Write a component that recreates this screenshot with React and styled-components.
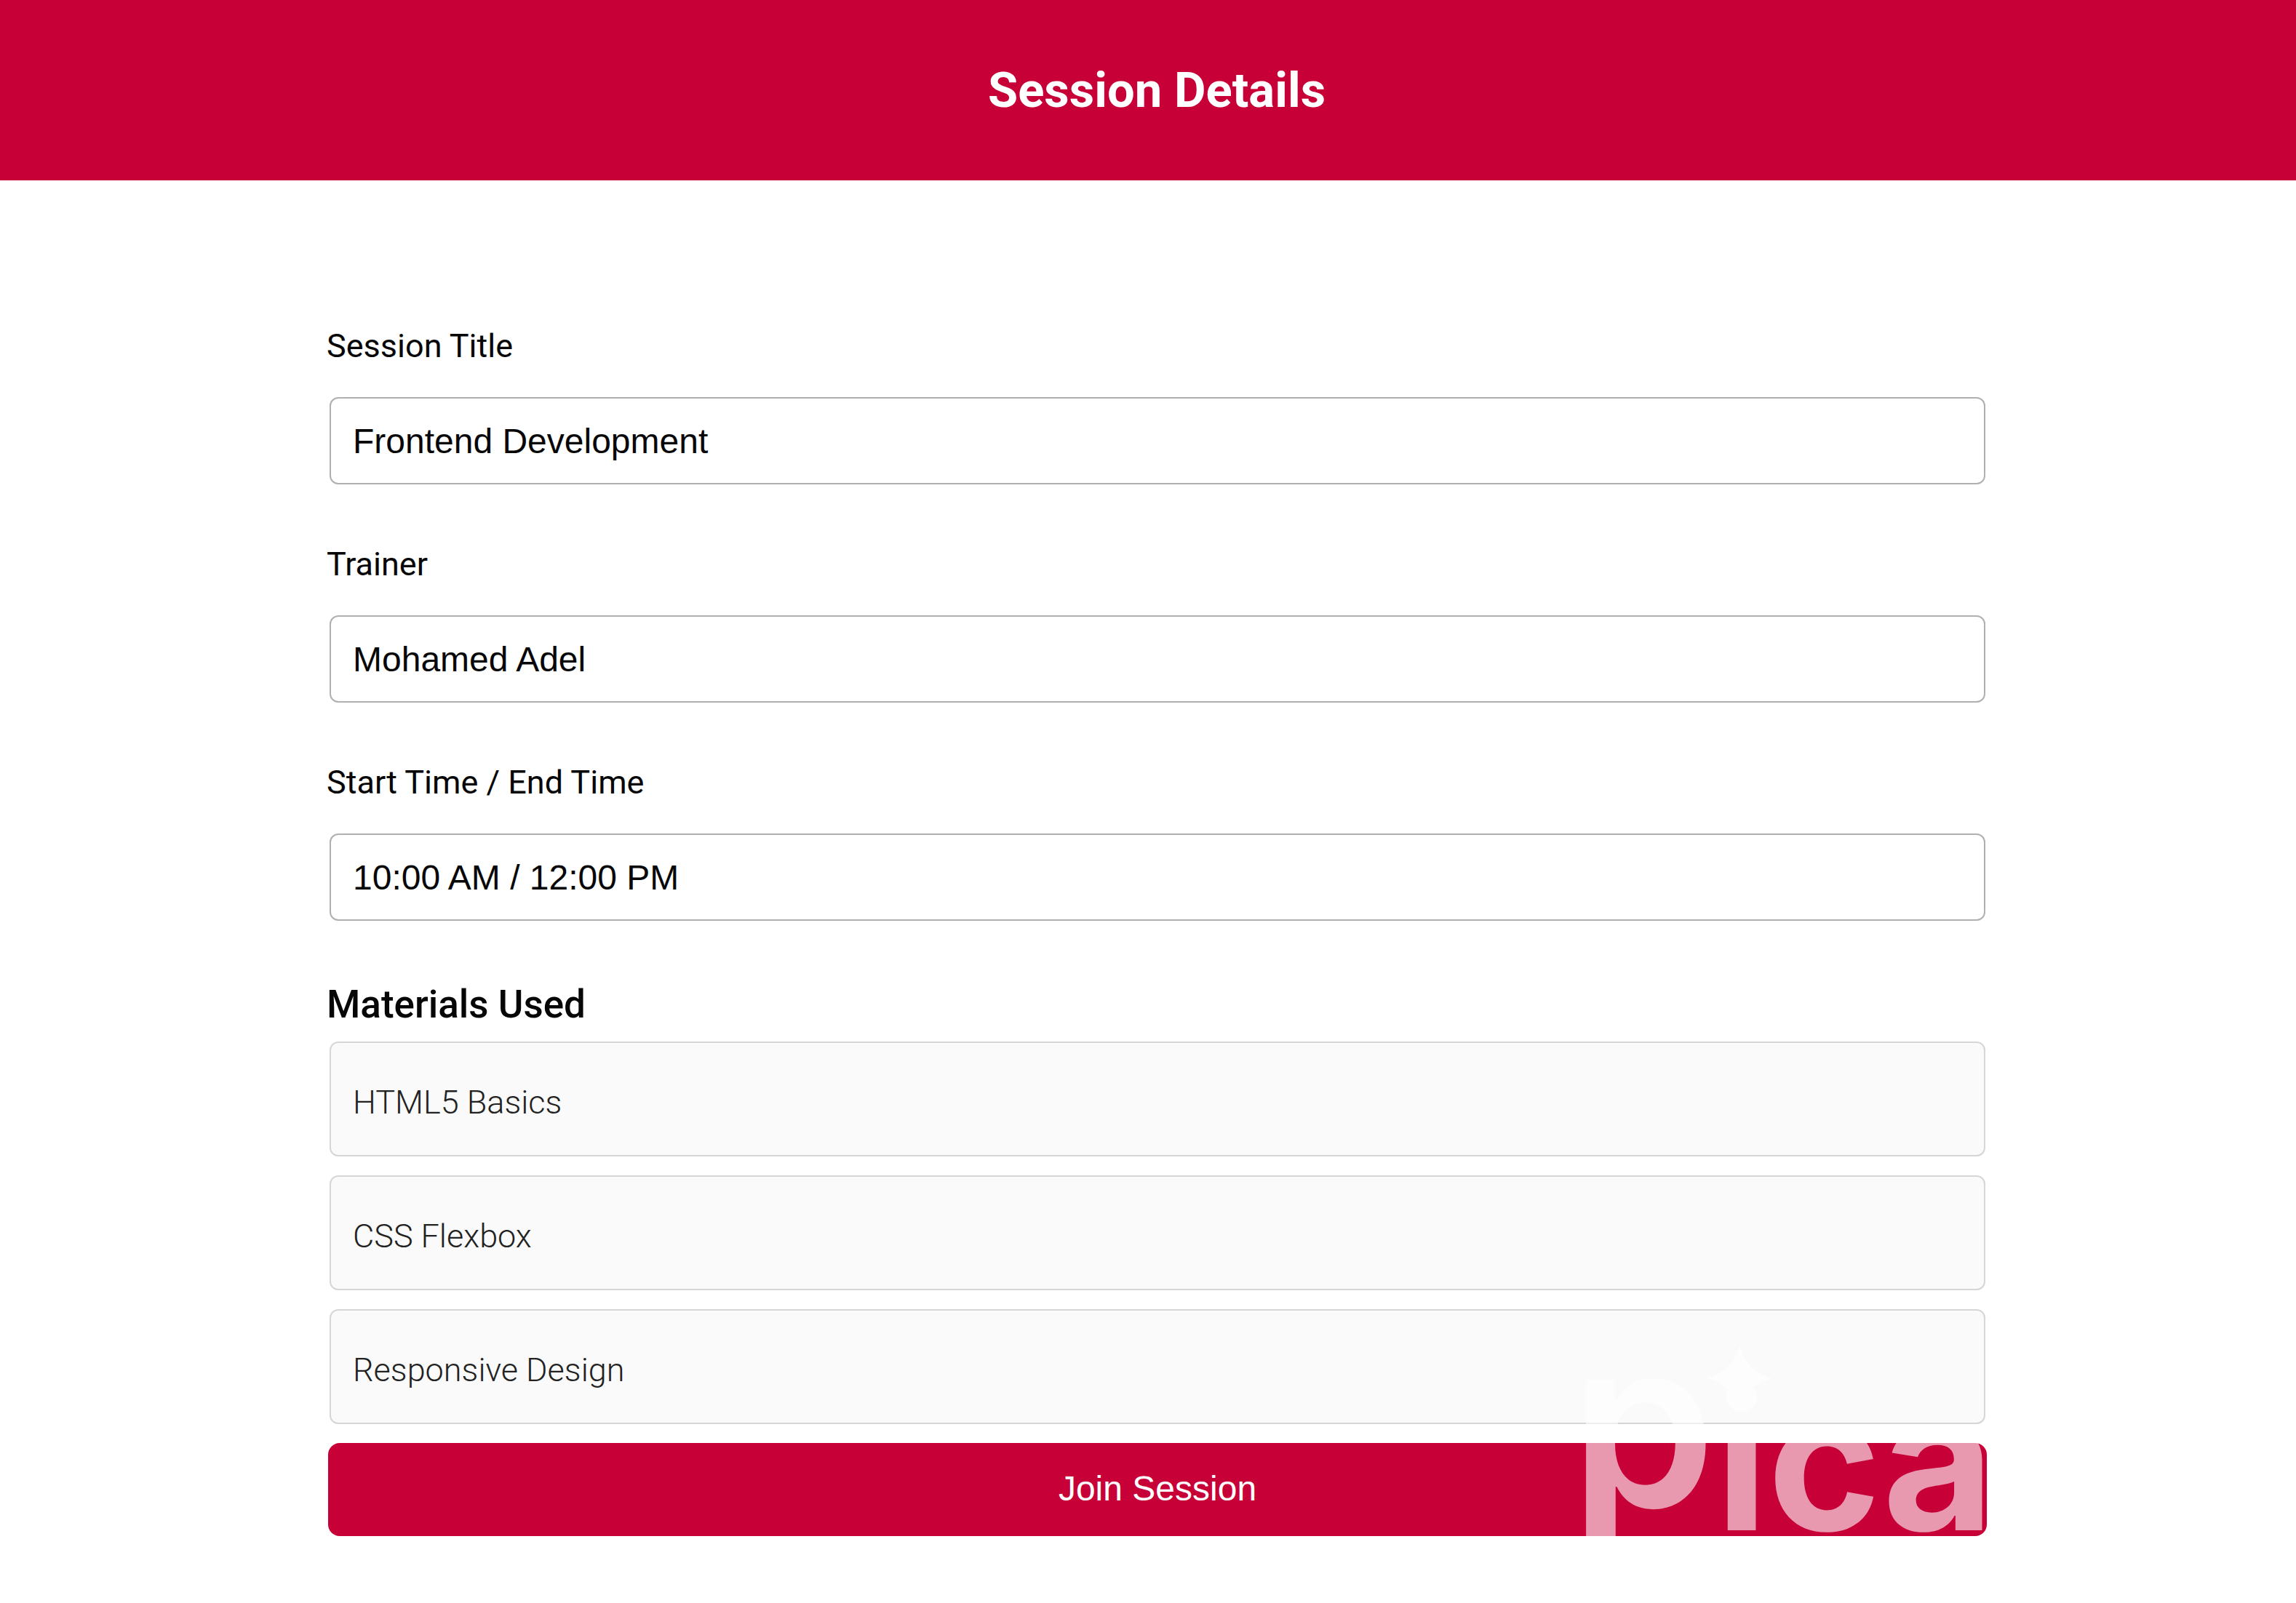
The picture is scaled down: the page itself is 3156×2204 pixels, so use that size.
import React from "react";
import styled, { createGlobalStyle } from "styled-components";

const brand = "#c80038";
const heading = `"Roboto", "Noto Sans", sans-serif`;
const control = `"Liberation Sans", Arial, sans-serif`;

const GlobalStyle = createGlobalStyle`
  *, *::before, *::after { box-sizing: border-box; }
  body { margin: 0; background: #ffffff; color: #060606; font-family: ${heading}; }
`;

const Header = styled.header`
  display: flex;
  align-items: center;
  justify-content: center;
  height: 248px;
  padding-left: 24px;
  background: ${brand};
`;

const PageTitle = styled.h1`
  margin: 0;
  color: #ffffff;
  font-size: 67px;
  line-height: 80px;
  font-weight: 700;
`;

const Main = styled.main`
  padding: 198px 0 92px 26px;
`;

const Form = styled.form`
  display: flex;
  flex-direction: column;
  gap: 80px;
  width: 100%;
  max-width: 2284px;
  margin: 0 auto;
`;

const Field = styled.div`
  display: flex;
  flex-direction: column;
  gap: 40px;
`;

const Label = styled.label`
  font-size: 45px;
  line-height: 60px;
  font-weight: 400;
`;

const TextInput = styled.input`
  height: 120px;
  margin: 0 4px;
  padding: 0 30px;
  border: 2px solid #b0b0b0;
  border-radius: 12px;
  background: #ffffff;
  color: #060606;
  font-family: ${control};
  font-size: 48px;
  outline: none;
`;

const Materials = styled.section`
  display: flex;
  flex-direction: column;
  gap: 16px;
`;

const SectionTitle = styled.h2`
  margin: 0;
  font-size: 53px;
  line-height: 70px;
  font-weight: 500;
`;

const Stack = styled.div`
  position: relative;
  display: flex;
  flex-direction: column;
  gap: 26px;
`;

const MaterialList = styled.ul`
  display: flex;
  flex-direction: column;
  gap: 26px;
  margin: 0 4px;
  padding: 0;
  list-style: none;
`;

const MaterialItem = styled.li`
  display: flex;
  align-items: center;
  height: 158px;
  padding: 10px 30px 0;
  border: 2px solid #d6d6d6;
  border-radius: 12px;
  background: #fafafa;
  color: #222222;
  font-size: 45px;
  line-height: 60px;
  font-weight: 300;
`;

const JoinButton = styled.button`
  height: 128px;
  margin: 0 2px;
  padding: 0 0 4px;
  border: 0;
  border-radius: 16px;
  background: ${brand};
  color: #ffffff;
  font-family: ${control};
  font-size: 48px;
  cursor: pointer;
`;

const Watermark = styled.div`
  position: absolute;
  right: -8px;
  bottom: 8px;
  display: flex;
  align-items: flex-end;
  opacity: 0.6;
  color: #ffffff;
  font-family: "Inter", sans-serif;
  pointer-events: none;
`;

const BigLetter = styled.span`
  font-size: 320px;
  line-height: 296px;
  font-weight: 600;
`;

const Letters = styled.span`
  font-size: 264px;
  line-height: 192px;
  font-weight: 700;
`;

const Spark = styled.svg`
  position: absolute;
  top: 40px;
  right: 304px;
  width: 92px;
  height: 94px;
`;

const fields = [
  { id: "title", label: "Session Title", value: "Frontend Development" },
  { id: "trainer", label: "Trainer", value: "Mohamed Adel" },
  { id: "time", label: "Start Time / End Time", value: "10:00 AM / 12:00 PM" },
];

const materials = ["HTML5 Basics", "CSS Flexbox", "Responsive Design"];

export default function App() {
  return (
    <>
      <GlobalStyle />
      <Header>
        <PageTitle>Session Details</PageTitle>
      </Header>
      <Main>
        <Form onSubmit={(event) => event.preventDefault()}>
          {fields.map(({ id, label, value }) => (
            <Field key={id}>
              <Label htmlFor={id}>{label}</Label>
              <TextInput id={id} type="text" value={value} readOnly />
            </Field>
          ))}
          <Materials>
            <SectionTitle>Materials Used</SectionTitle>
            <Stack>
              <MaterialList>
                {materials.map((name) => (
                  <MaterialItem key={name}>{name}</MaterialItem>
                ))}
              </MaterialList>
              <JoinButton type="submit">Join Session</JoinButton>
              <Watermark>
                <BigLetter>p</BigLetter>
                <Letters>ica</Letters>
                <Spark viewBox="0 0 92 94" aria-hidden="true">
                  <path
                    d="M46 0 C49 18 62 40 92 47 C62 54 49 76 46 94 C43 76 30 54 0 47 C30 40 43 18 46 0 Z"
                    fill="currentColor"
                  />
                </Spark>
              </Watermark>
            </Stack>
          </Materials>
        </Form>
      </Main>
    </>
  );
}
